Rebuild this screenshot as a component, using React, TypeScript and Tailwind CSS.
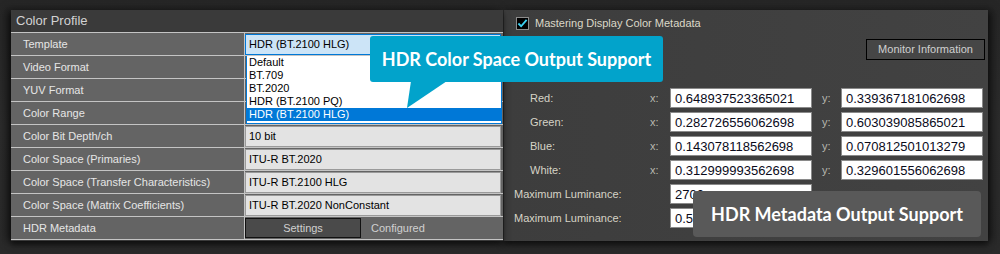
import React from "react";

const ui = { fontFamily: '"Liberation Sans", Arial, sans-serif' };
const callFont = { fontFamily: 'Lato, "Open Sans", sans-serif' };

const rows: { label: string; value?: string; kind: "select" | "input" | "blank" | "settings" }[] = [
  { label: "Template", kind: "select" },
  { label: "Video Format", kind: "blank" },
  { label: "YUV Format", kind: "blank" },
  { label: "Color Range", kind: "blank" },
  { label: "Color Bit Depth/ch", value: "10 bit", kind: "input" },
  { label: "Color Space (Primaries)", value: "ITU-R BT.2020", kind: "input" },
  { label: "Color Space (Transfer Characteristics)", value: "ITU-R BT.2100 HLG", kind: "input" },
  { label: "Color Space (Matrix Coefficients)", value: "ITU-R BT.2020 NonConstant", kind: "input" },
  { label: "HDR Metadata", kind: "settings" },
];

const coords = [
  { label: "Red:", x: "0.648937523365021", y: "0.339367181062698" },
  { label: "Green:", x: "0.282726556062698", y: "0.603039085865021" },
  { label: "Blue:", x: "0.143078118562698", y: "0.070812501013279" },
  { label: "White:", x: "0.312999993562698", y: "0.329601556062698" },
];

function Field({ v }: { v: string }) {
  return (
    <div className="w-[142px] h-[20px] bg-white border border-[#8a8a8a] flex items-center pl-[4px] text-[13px] text-[#0a0a1a] leading-none">
      {v}
    </div>
  );
}

export default function App() {
  return (
    <div
      className="relative w-[1000px] h-[254px] overflow-hidden bg-gradient-to-b from-[#262626] via-[#2c2c2c] to-[#2a2a2a]"
      style={ui}
    >
      <div className="flex pt-[10px] pl-[11px]">
        {/* Left panel */}
        <div className="w-[492px] h-[231px] bg-[#3a3a3a] shadow-[-4px_0_8px_rgba(0,0,0,0.55),0_4px_6px_rgba(0,0,0,0.5)] relative z-10">
          <div className="h-[22px] flex items-center pl-[5px] text-[13px] text-[#d2d2d2]">Color Profile</div>
          <div className="relative border-t border-[#c4c4c4]">
            {rows.map((r) => (
              <div key={r.label} className="flex h-[23px] border-b border-[#c4c4c4] bg-[#646464]">
                <div className="w-[234px] border-r border-[#c4c4c4] flex items-center pl-[12px] text-[11px] text-[#e6e6e6]">
                  {r.label}
                </div>
                <div className="flex-1 flex items-center">
                  {r.kind === "select" && (
                    <div className="w-[256px] h-[21px] bg-[#cce4f7] border border-[#0078d7] flex items-center pl-[3px] text-[11px] text-black">
                      HDR (BT.2100 HLG)
                    </div>
                  )}
                  {r.kind === "input" && (
                    <div className="w-[256px] h-[21px] bg-[#e3e3e3] border border-[#9a9a9a] flex items-center pl-[3px] text-[11px] text-black">
                      {r.value}
                    </div>
                  )}
                  {r.kind === "settings" && (
                    <div className="flex items-center">
                      <div className="w-[116px] h-[20px] bg-[#4a4a4a] border border-[#111] flex items-center justify-center text-[11px] text-[#d0d0d0]">
                        Settings
                      </div>
                      <div className="ml-[10px] text-[11px] text-[#d0d0d0]">Configured</div>
                    </div>
                  )}
                </div>
              </div>
            ))}
            {/* dropdown list */}
            <div className="absolute left-[235px] top-[23px] w-[256px] h-[68px] bg-white border-x border-b border-[#0078d7] text-[11px] text-black leading-[13px]">
              <div className="h-[13px] pl-[2px]">Default</div>
              <div className="h-[13px] pl-[2px]">BT.709</div>
              <div className="h-[13px] pl-[2px]">BT.2020</div>
              <div className="h-[13px] pl-[2px]">HDR (BT.2100 PQ)</div>
              <div className="h-[13px] pl-[2px] bg-[#0078d7] text-white">HDR (BT.2100 HLG)</div>
            </div>
          </div>
        </div>

        {/* Right panel */}
        <div className="w-[485px] h-[231px] bg-gradient-to-r from-[#3d3d3d] to-[#424242] border-l border-[#2a2a2a] shadow-[4px_0_8px_rgba(0,0,0,0.5),0_4px_6px_rgba(0,0,0,0.5)] flex flex-col">
          <div className="flex items-center pt-[7px] pl-[12px] h-[20px]">
            <div className="w-[13px] h-[13px] bg-black border border-[#8c8c8c] flex items-center justify-center">
              <svg width="12" height="11" viewBox="0 0 12 11">
                <path d="M1.5 5.5 L4.5 8.5 L10.5 1.5" fill="none" stroke="#3cd2f2" strokeWidth="2" />
              </svg>
            </div>
            <span className="ml-[6px] text-[11px] text-[#dcd8c8]">Mastering Display Color Metadata</span>
          </div>
          <div className="flex justify-end pr-[3px] mt-[9px]">
            <div className="w-[119px] h-[21px] bg-[#464646] border border-black flex items-center justify-center text-[11px] text-[#d0d0d0]">
              Monitor Information
            </div>
          </div>
          <div className="flex flex-col gap-[4px] mt-[28px]">
            {coords.map((c) => (
              <div key={c.label} className="flex items-center h-[20px]">
                <div className="w-[146px] pl-[26px] text-[11px] text-[#d6d3c6]">{c.label}</div>
                <div className="w-[20px] text-[11px] text-[#b8b8b0]">x:</div>
                <Field v={c.x} />
                <div className="w-[29px] pl-[10px] text-[11px] text-[#b8b8b0]">y:</div>
                <Field v={c.y} />
              </div>
            ))}
            {["2700", "0.5"].map((v) => (
              <div key={v} className="flex items-center h-[20px]">
                <div className="w-[166px] pl-[10px] text-[11px] text-[#d6d3c6]">Maximum Luminance:</div>
                <Field v={v} />
              </div>
            ))}
          </div>
        </div>
      </div>

      {/* Callout 1 */}
      <div className="absolute left-[370px] top-[36px] z-20">
        <div
          className="w-[293px] h-[46px] rounded-[3px] bg-[#02a3cb] flex items-center justify-center text-white text-[18px] font-bold"
          style={callFont}
        >
          HDR Color Space Output Support
        </div>
        <svg className="absolute left-[37px] top-[45px]" width="42" height="28" viewBox="0 0 42 28">
          <polygon points="4,0 40,0 0,27" fill="#02a3cb" />
        </svg>
      </div>

      {/* Callout 2 */}
      <div
        className="absolute left-[693px] top-[191px] z-20 w-[288px] h-[46px] rounded-[4px] bg-[#595959] flex items-center justify-center text-white text-[18px] font-bold"
        style={callFont}
      >
        HDR Metadata Output Support
      </div>
    </div>
  );
}
